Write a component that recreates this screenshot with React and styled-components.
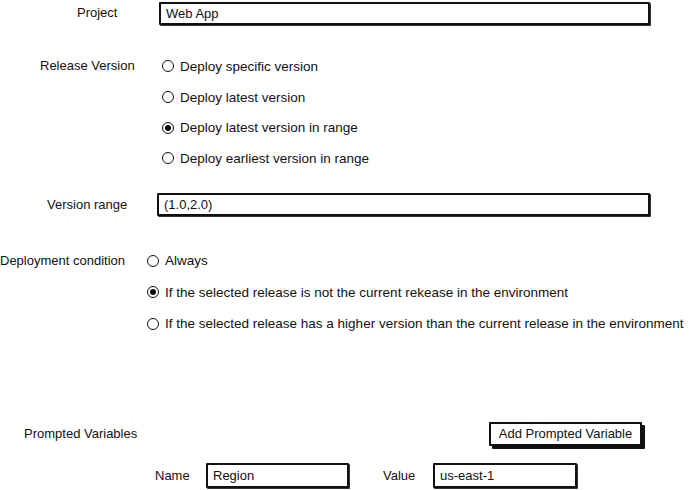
import styled, { createGlobalStyle } from "styled-components";

const Global = createGlobalStyle`
  body {
    margin: 0;
    background: #fff;
    font-family: "Liberation Sans", Arial, sans-serif;
    font-size: 13px;
    color: #111;
  }
`;

const Page = styled.div`
  width: 692px;
  height: 490px;
  padding-top: 2px;
  box-sizing: border-box;
  display: flex;
  flex-direction: column;
  overflow: hidden;
`;

const Row = styled.div`
  display: flex;
  align-items: flex-start;
  margin-top: ${(p) => p.$top || 0}px;
`;

const Label = styled.div`
  flex: 0 0 ${(p) => p.$col}px;
  box-sizing: border-box;
  padding-left: ${(p) => p.$indent}px;
  height: ${(p) => p.$h || 23}px;
  line-height: ${(p) => p.$h || 23}px;
  white-space: nowrap;
`;

const Field = styled.div`
  box-sizing: border-box;
  width: ${(p) => p.$w}px;
  height: ${(p) => p.$h || 23}px;
  border: 2px solid #111;
  border-radius: 1px;
  box-shadow: 1px 1px 0 #333;
  padding: 0 6px 0 5px;
  display: flex;
  align-items: center;
  background: #fff;
`;

const Options = styled.div`
  display: flex;
  flex-direction: column;
  font-size: 13.5px;
`;

const Option = styled.div`
  display: flex;
  align-items: center;
  height: ${(p) => p.$h}px;
  gap: 6px;
  white-space: nowrap;
`;

const Dot = styled.span`
  box-sizing: border-box;
  width: 12px;
  height: 12px;
  border: 1.5px solid #111;
  border-radius: 50%;
  display: flex;
  align-items: center;
  justify-content: center;
  &::after {
    content: "";
    width: 6px;
    height: 6px;
    border-radius: 50%;
    background: #111;
    display: ${(p) => (p.$on ? "block" : "none")};
  }
`;

const VarsHeader = styled.div`
  display: flex;
  align-items: center;
  justify-content: space-between;
  padding: 0 50px 0 24px;
  margin-top: 82px;
`;

const Button = styled.button`
  box-sizing: border-box;
  height: 24px;
  width: 153px;
  border: 2px solid #111;
  border-radius: 1px;
  box-shadow: 3px 3px 0 #111;
  background: #fff;
  font: inherit;
  color: inherit;
  padding: 0;
`;

const VarRow = styled.div`
  display: flex;
  align-items: center;
  margin-top: 17px;
  padding-left: 155px;
`;

const VarLabel = styled.span`
  width: ${(p) => p.$w}px;
  margin-left: ${(p) => p.$gap || 0}px;
`;

function RadioGroup({ items, selected, h }) {
  return (
    <Options>
      {items.map((t, i) => (
        <Option key={t} $h={h}>
          <Dot $on={i === selected} />
          {t}
        </Option>
      ))}
    </Options>
  );
}

export default function App() {
  return (
    <Page>
      <Global />
      <Row>
        <Label $col={159} $indent={77} $h={22}>Project</Label>
        <Field $w={491}>Web App</Field>
      </Row>

      <Row $top={26}>
        <Label $col={162} $indent={40} $h={30.7}>Release Version</Label>
        <RadioGroup
          h={30.7}
          selected={2}
          items={[
            "Deploy specific version",
            "Deploy latest version",
            "Deploy latest version in range",
            "Deploy earliest version in range",
          ]}
        />
      </Row>

      <Row $top={19}>
        <Label $col={157} $indent={47}>Version range</Label>
        <Field $w={493}>(1.0,2.0)</Field>
      </Row>

      <Row $top={29}>
        <Label $col={147} $indent={0} $h={31}>Deployment condition</Label>
        <RadioGroup
          h={31.6}
          selected={1}
          items={[
            "Always",
            "If the selected release is not the current rekease in the environment",
            "If the selected release has a higher version than the current release in the environment",
          ]}
        />
      </Row>

      <VarsHeader>
        <span>Prompted Variables</span>
        <Button>Add Prompted Variable</Button>
      </VarsHeader>

      <VarRow>
        <VarLabel $w={51}>Name</VarLabel>
        <Field $w={143} $h={25}>Region</Field>
        <VarLabel $w={50} $gap={34}>Value</VarLabel>
        <Field $w={144} $h={25}>us-east-1</Field>
      </VarRow>
    </Page>
  );
}
